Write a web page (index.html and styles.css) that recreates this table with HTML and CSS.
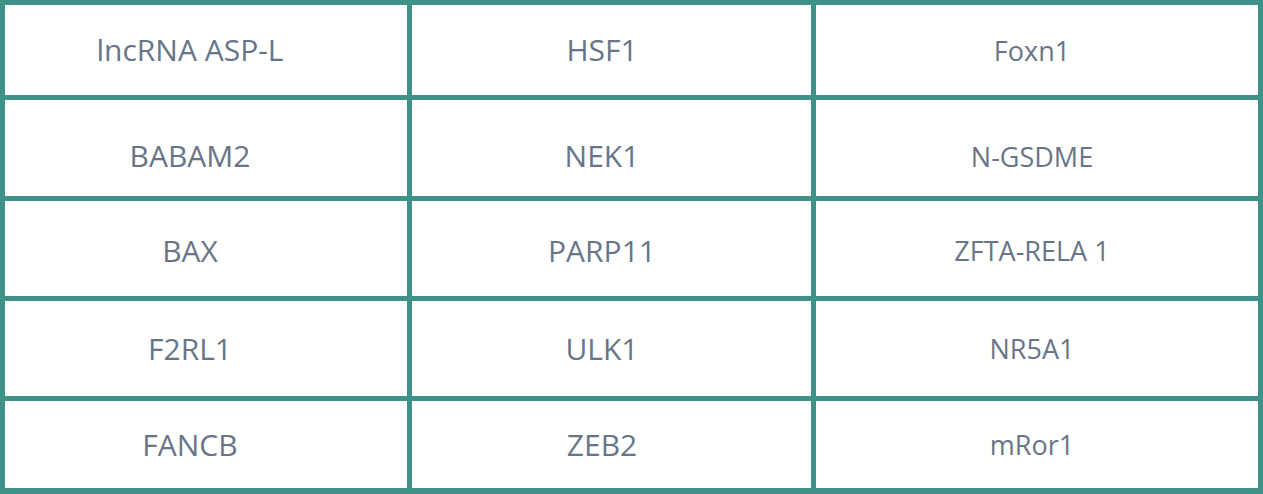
FILE: index.html
```html
<!DOCTYPE html>
<html lang="en">
<head>
<meta charset="utf-8">
<title>Gene table</title>
<link rel="stylesheet" href="styles.css">
</head>
<body>
<div class="grid">
  <div class="cell c1">lncRNA ASP-L</div>
  <div class="cell c2">HSF1</div>
  <div class="cell c3">Foxn1</div>
  <div class="cell c1 r2">BABAM2</div>
  <div class="cell c2 r2">NEK1</div>
  <div class="cell c3 r2">N-GSDME</div>
  <div class="cell c1 r3">BAX</div>
  <div class="cell c2 r3">PARP11</div>
  <div class="cell c3 r3">ZFTA-RELA 1</div>
  <div class="cell c1">F2RL1</div>
  <div class="cell c2">ULK1</div>
  <div class="cell c3">NR5A1</div>
  <div class="cell c1">FANCB</div>
  <div class="cell c2">ZEB2</div>
  <div class="cell c3">mRor1</div>
</div>
</body>
</html>
```
FILE: styles.css
```css
html, body {
  margin: 0;
  padding: 0;
  background: #ffffff;
}

.grid {
  display: grid;
  grid-template-columns: 402px 399px 442px;
  grid-template-rows: 90px 96px 95px 95px 87px;
  gap: 5px;
  padding: 5px;
  background: #3e9288;
  width: 1263px;
  height: 494px;
  box-sizing: border-box;
}

.cell {
  background: #ffffff;
  display: flex;
  align-items: center;
  justify-content: center;
  font-family: "Open Sans", "Noto Sans", sans-serif;
  font-size: 30px;
  color: #687589;
  line-height: 1;
  white-space: nowrap;
}

.c1 { padding-right: 32px; }
.c2 { padding-right: 19px; }
.c3 { padding-right: 10px; font-size: 27px; }
.r2 { padding-top: 16px; }
.r3 { padding-top: 4px; }
```
